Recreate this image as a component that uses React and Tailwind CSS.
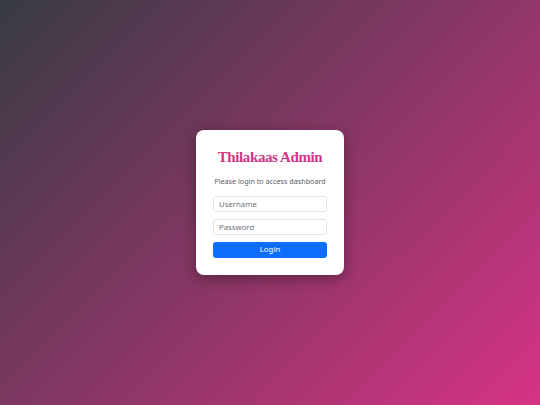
export default function App() {
  return (
    <div className="w-full h-[405px] flex items-center justify-center bg-[linear-gradient(135deg,#373b44_0%,#d63384_100%)] font-['Noto_Sans',sans-serif]">
      <div className="w-[148px] bg-white rounded-lg shadow-[0_4px_14px_rgba(0,0,0,0.35)] px-[17px] pt-[16px] pb-[17px] flex flex-col">
        <h1 className="text-center whitespace-nowrap text-[15px] leading-[22px] font-bold tracking-[-0.4px] text-[#d63384] font-['Liberation_Serif',serif]">
          Thilakaas Admin
        </h1>
        <p className="text-center whitespace-nowrap text-[7.2px] leading-[10px] text-[#5c636a] mt-[8px] mb-[10px]">
          Please login to access dashboard
        </p>
        <input
          type="text"
          placeholder="Username"
          className="h-[16px] w-full border border-[#dee2e6] rounded-[3px] px-[5px] text-[7.8px] placeholder:text-[#6c757d] outline-none"
        />
        <input
          type="password"
          placeholder="Password"
          className="mt-[7px] h-[16px] w-full border border-[#dee2e6] rounded-[3px] px-[5px] text-[7.8px] placeholder:text-[#6c757d] outline-none"
        />
        <button className="mt-[7px] h-[16px] w-full bg-[#0d6efd] text-white text-[7.8px] rounded-[3px]">
          Login
        </button>
      </div>
    </div>
  );
}
